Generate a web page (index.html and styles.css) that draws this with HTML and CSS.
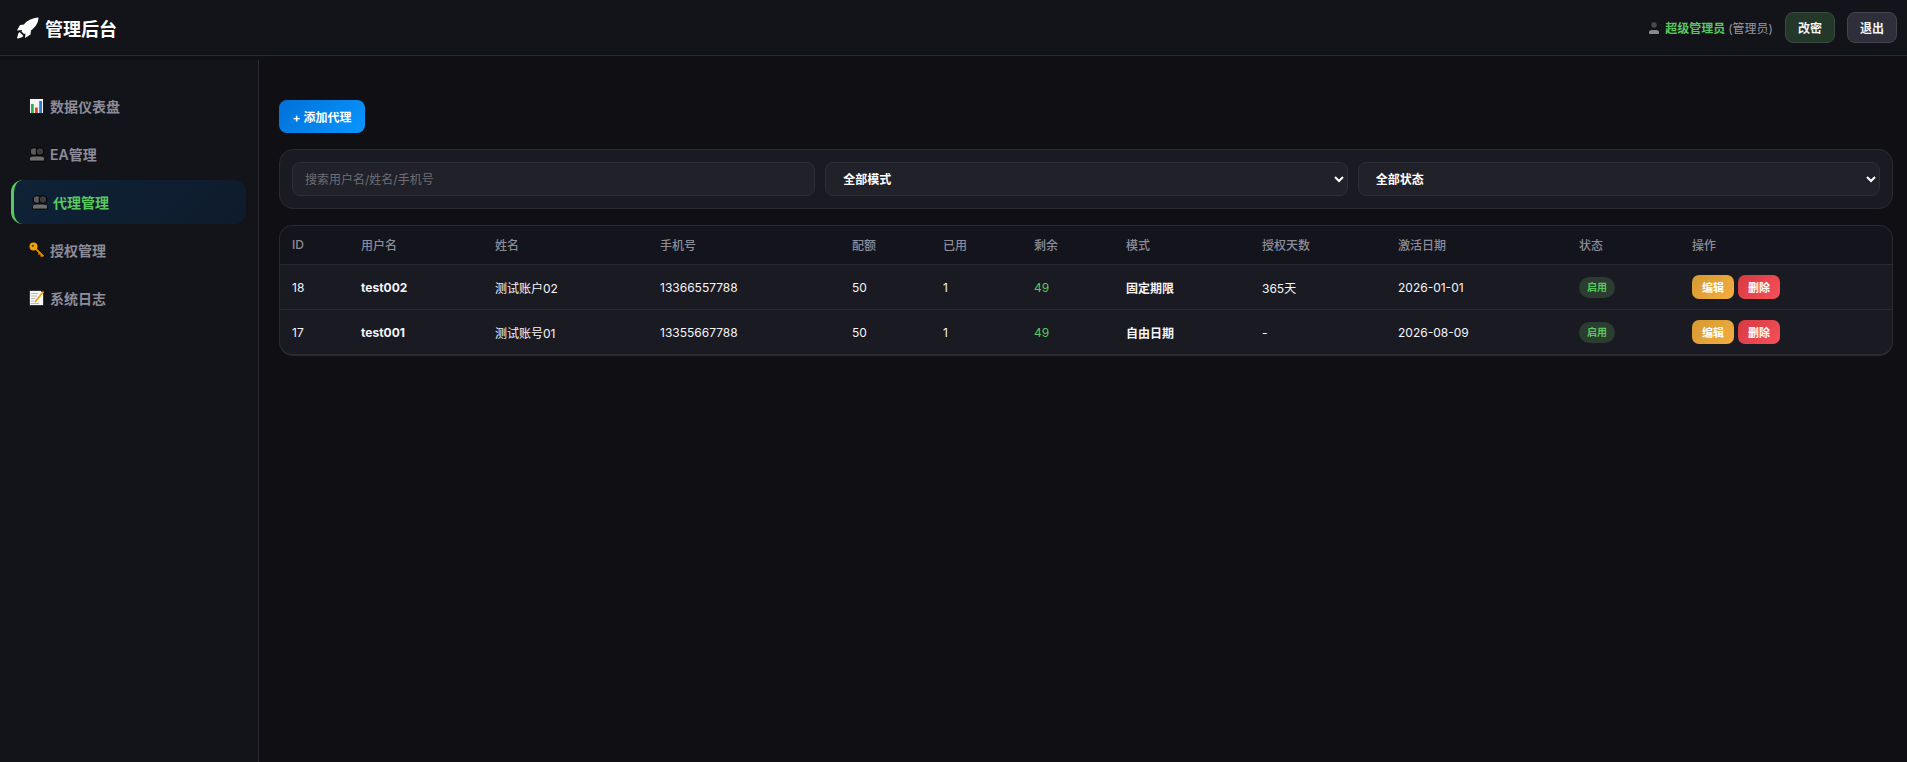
FILE: index.html
```html
<!DOCTYPE html>
<html lang="zh-CN">
<head>
<meta charset="utf-8">
<title>管理后台</title>
<link rel="stylesheet" href="styles.css">
</head>
<body>
<header class="topbar">
  <div class="brand">
    <svg class="rocket" viewBox="0 0 22 22"><path fill="#fff" d="M21.500 .5C15 1 10 3.500 7 7.500L3 8 0 13.500l5-.5-.5 1.500 2.500 2.500 1.500-.5-.5 4.500 5.500-3.500.5-4C18 10.500 21.500 6 21.500 .5z"/><path fill="#fff" d="M2.500 15C1 16.500 .5 19 0 21.500c2.500-.2 5-1 6.500-2.500z"/></svg>
    <span>管理后台</span>
  </div>
  <div class="user-area">
    <span class="user-info">
      <svg class="user-icon" viewBox="0 0 14 14"><circle cx="7" cy="4" r="3.400" fill="#4a4a4a" stroke="#000" stroke-width=".8"/><path fill="#8a8a8a" stroke="#000" stroke-width=".8" d="M1.500 13.500v-2.500C1.500 9 3.500 8.500 7 8.500s5.500.5 5.500 2.500v2.500z"/></svg>
      <span class="user-name">超级管理员</span> <span class="user-role">(管理员)</span>
    </span>
    <button class="top-btn top-btn-green">改密</button>
    <button class="top-btn top-btn-grey">退出</button>
  </div>
</header>
<div class="layout">
  <nav class="sidebar">
    <a class="nav-item">
      <svg class="nav-icon" viewBox="0 0 16 16"><rect x=".5" y=".5" width="14" height="15" fill="#f4f4f4" stroke="#000" stroke-width=".8"/><rect x="2" y="6" width="2.800" height="9" fill="#2db34a"/><rect x="6" y="9.500" width="2.800" height="5.500" fill="#e0452c"/><rect x="10.200" y="3" width="2.800" height="12" fill="#2b7fd6"/></svg>
      <span>数据仪表盘</span>
    </a>
    <a class="nav-item">
      <svg class="nav-icon" viewBox="0 0 16 16"><circle cx="5" cy="5.500" r="3.800" fill="#5c5c5c" stroke="#000" stroke-width="1.100"/><circle cx="11" cy="5.500" r="3.800" fill="#3c3c3c" stroke="#000" stroke-width="1.100"/><path fill="#6e6e6e" stroke="#000" stroke-width=".8" d="M.5 15v-2.500C.5 10.500 2.500 10 8 10s7.500.5 7.500 2.500V15z"/></svg>
      <span>EA管理</span>
    </a>
    <a class="nav-item nav-item-active">
      <svg class="nav-icon" viewBox="0 0 16 16"><circle cx="5" cy="5.500" r="3.800" fill="#5c5c5c" stroke="#000" stroke-width="1.100"/><circle cx="11" cy="5.500" r="3.800" fill="#3c3c3c" stroke="#000" stroke-width="1.100"/><path fill="#6e6e6e" stroke="#000" stroke-width=".8" d="M.5 15v-2.500C.5 10.500 2.500 10 8 10s7.500.5 7.500 2.500V15z"/></svg>
      <span>代理管理</span>
    </a>
    <a class="nav-item">
      <svg class="nav-icon" viewBox="0 0 16 16"><path stroke="#000" stroke-width="3.200" d="M6 6l9 9" fill="none"/><path stroke="#dc9200" stroke-width="2" d="M6 6l8.500 8.500" fill="none"/><path stroke="#dc9200" stroke-width="1.500" d="M11 11l-1.500 1.500M13 13l-1.500 1.500" fill="none"/><circle cx="4.500" cy="4.500" r="4" fill="#f0a30a"/><circle cx="3.800" cy="3.800" r="1.100" fill="#5a3c00"/></svg>
      <span>授权管理</span>
    </a>
    <a class="nav-item">
      <svg class="nav-icon" viewBox="0 0 16 16"><path fill="#f5f5f5" stroke="#000" stroke-width=".6" d="M.5 .5h11L14.500 3v12.500H.5z"/><path stroke="#aaa" stroke-width=".8" d="M2 3.500h7M2 6h6M2 8.500h4M2 11h3M2 13.500h8" fill="none"/><path stroke="#f0a30a" stroke-width="1.800" d="M14.500 1.500L6 12" fill="none"/></svg>
      <span>系统日志</span>
    </a>
  </nav>
  <main class="content">
    <button class="add-btn">+ 添加代理</button>
    <div class="filters">
      <input class="field field-input" type="text" placeholder="搜索用户名/姓名/手机号">
      <select class="field field-select"><option>全部模式</option></select>
      <select class="field field-select"><option>全部状态</option></select>
    </div>
    <div class="table-wrap">
      <table class="data-table">
        <colgroup>
          <col class="c-id"><col class="c-user"><col class="c-name"><col class="c-phone"><col class="c-num"><col class="c-num"><col class="c-left"><col class="c-mode"><col class="c-days"><col class="c-date"><col class="c-status"><col>
        </colgroup>
        <thead>
          <tr><th>ID</th><th>用户名</th><th>姓名</th><th>手机号</th><th>配额</th><th>已用</th><th>剩余</th><th>模式</th><th>授权天数</th><th>激活日期</th><th>状态</th><th>操作</th></tr>
        </thead>
        <tbody>
          <tr>
            <td>18</td><td class="strong">test002</td><td>测试账户02</td><td>13366557788</td><td>50</td><td>1</td><td class="green">49</td><td class="mode">固定期限</td><td>365天</td><td>2026-01-01</td>
            <td><span class="badge">启用</span></td>
            <td><div class="actions"><button class="act-btn act-edit">编辑</button><button class="act-btn act-del">删除</button></div></td>
          </tr>
          <tr>
            <td>17</td><td class="strong">test001</td><td>测试账号01</td><td>13355667788</td><td>50</td><td>1</td><td class="green">49</td><td class="mode">自由日期</td><td>-</td><td>2026-08-09</td>
            <td><span class="badge">启用</span></td>
            <td><div class="actions"><button class="act-btn act-edit">编辑</button><button class="act-btn act-del">删除</button></div></td>
          </tr>
        </tbody>
      </table>
    </div>
  </main>
</div>
</body>
</html>
```
FILE: styles.css
```css
* { box-sizing: border-box; }
html, body { height: 100%; }
body {
  margin: 0;
  background: #0f0f14;
  color: #f5f5f7;
  font-family: Inter, "Noto Sans CJK SC", sans-serif;
  font-size: 12px;
  overflow: hidden;
}
button { font-family: inherit; cursor: pointer; }
.topbar {
  height: 56px;
  display: flex;
  justify-content: space-between;
  align-items: center;
  padding: 0 10px 0 17px;
  background: #13131a;
  border-bottom: 1px solid #2a2a33;
}
.brand {
  display: flex;
  align-items: center;
  gap: 6px;
  font-size: 18px;
  font-weight: 700;
  color: #fff;
}
.rocket { width: 22px; height: 22px; }
.user-area { display: flex; align-items: center; gap: 12px; }
.user-info { display: flex; align-items: center; gap: 3px; font-size: 12px; }
.user-icon { width: 14px; height: 14px; margin-right: 1px; }
.user-name { color: #5ac85f; font-weight: 600; }
.user-role { color: #98989f; }
.top-btn {
  width: 50px;
  height: 31px;
  padding: 0;
  border-radius: 8px;
  font-size: 12px;
  font-weight: 600;
  color: #f5f5f7;
}
.top-btn-green { background: #24382a; border: 1px solid #3a4a40; }
.top-btn-grey { background: #2f2f3c; border: 1px solid #44444f; }
.layout { display: flex; height: calc(100vh - 56px); }
.sidebar {
  width: 259px;
  flex: none;
  margin-top: 4px;
  padding: 24px 12px 0 11px;
  background: #13131a;
  border-right: 1px solid #2a2a33;
  display: flex;
  flex-direction: column;
  gap: 4px;
}
.nav-item {
  height: 44px;
  display: flex;
  align-items: center;
  gap: 5px;
  padding-left: 18px;
  border-radius: 12px;
  font-size: 14px;
  font-weight: 600;
  color: #8c8c98;
}
.nav-icon { width: 16px; height: 16px; flex: none; }
.nav-item-active {
  color: #5ac85f;
  border-left: 3px solid #5ac85f;
  background: linear-gradient(135deg, #0f2236, #0e1b2c);
}
.content {
  flex: 1;
  min-width: 0;
  padding: 44px 14px 0 20px;
}
.add-btn {
  display: block;
  width: 86px;
  height: 33px;
  padding: 0;
  border: 0;
  border-radius: 8px;
  background: linear-gradient(135deg, #0071d8, #0a95ff);
  color: #fff;
  font-size: 12px;
  font-weight: 600;
}
.filters {
  display: flex;
  gap: 10px;
  height: 60px;
  margin-top: 16px;
  padding: 12px;
  background: #1a1a23;
  border: 1px solid #2a2a33;
  border-radius: 14px;
}
.field {
  flex: 1;
  min-width: 0;
  height: 34px;
  padding: 0 12px;
  background: #212129;
  border: 1px solid #2d2d37;
  border-radius: 8px;
  color: #fff;
  font-family: inherit;
  font-size: 12px;
}
.field-input { flex: 1 1 28px; }
.field::placeholder { color: #6e6e73; }
.field-select { font-weight: 600; padding-left: 13px; color-scheme: dark; }
.table-wrap {
  margin-top: 16px;
  background: #1a1a23;
  border: 1px solid #2a2a33;
  border-bottom-width: 2px;
  border-radius: 14px;
  overflow: hidden;
}
.data-table {
  width: 100%;
  border-collapse: collapse;
  table-layout: fixed;
}
.c-id { width: 69px; }
.c-user { width: 134px; }
.c-name { width: 165px; }
.c-phone { width: 192px; }
.c-num { width: 91px; }
.c-left { width: 92px; }
.c-mode { width: 136px; }
.c-days { width: 136px; }
.c-date { width: 181px; }
.c-status { width: 113px; }
.data-table th {
  height: 38px;
  padding: 0 12px;
  background: #14141c;
  border-bottom: 1px solid #2a2a33;
  color: #8c8c98;
  font-size: 12px;
  font-weight: 500;
  text-align: left;
}
.data-table td {
  height: 45px;
  padding: 1px 12px 0;
  border-bottom: 1px solid #2a2a33;
  color: #f5f5f7;
  font-size: 12px;
}
.data-table tr:last-child td { border-bottom: 0; }
.data-table .strong { font-weight: 700; }
.data-table .green { color: #5ac85f; }
.data-table .mode { font-size: 12px; font-weight: 600; }
.badge {
  display: inline-block;
  height: 21px;
  width: 36px;
  line-height: 21px;
  text-align: center;
  border-radius: 11px;
  background: #2b3c30;
  color: #5ac85f;
  font-size: 10px;
  font-weight: 600;
}
.actions { display: flex; gap: 4px; }
.act-btn {
  width: 42px;
  height: 24px;
  padding: 0;
  border: 0;
  border-radius: 7px;
  color: #fff;
  font-size: 11px;
  font-weight: 600;
}
.act-edit { background: linear-gradient(135deg, #d49a30, #f5ad42); }
.act-del { background: linear-gradient(135deg, #d63a40, #f7505a); }
```
